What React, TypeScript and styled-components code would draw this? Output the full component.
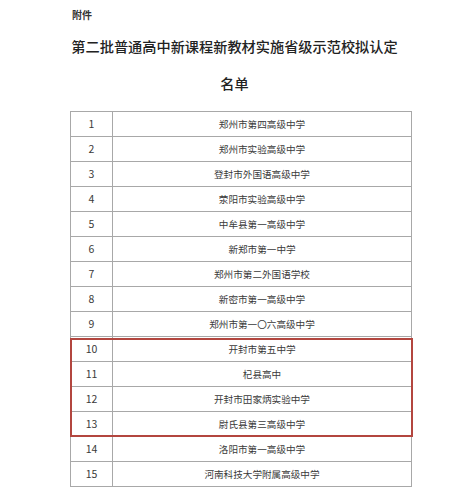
import React from "react";
import styled, { createGlobalStyle } from "styled-components";

const GlobalStyle = createGlobalStyle`
  html, body {
    margin: 0;
    padding: 0;
    background: #ffffff;
  }
  body {
    font-family: "Noto Sans CJK SC", "Noto Sans", sans-serif;
  }
`;

const Page = styled.div`
  width: 469px;
  height: 500px;
  padding-top: 8px;
  box-sizing: border-box;
  display: flex;
  flex-direction: column;
  background: #fff;
`;

const Label = styled.div`
  margin-left: 72px;
  font-size: 10px;
  line-height: 13px;
  font-weight: 700;
  color: #333;
`;

const Title = styled.div<{ $top: number }>`
  margin-top: ${(p) => p.$top}px;
  text-align: center;
  font-size: 14.2px;
  line-height: 20px;
  font-weight: 500;
  color: #222;
  white-space: nowrap;
`;

const Table = styled.div`
  margin: 18px 0 0 70px;
  width: 341px;
  border-top: 1px solid #a8a8a8;
  border-left: 1px solid #a8a8a8;
  display: flex;
  flex-direction: column;
`;

const Highlight = styled.div`
  position: relative;
  display: flex;
  flex-direction: column;
  &::after {
    content: "";
    position: absolute;
    top: 1px;
    left: -1px;
    right: -1px;
    bottom: 0;
    border: 2px solid #b3463f;
    pointer-events: none;
  }
`;

const Row = styled.div`
  display: grid;
  grid-template-columns: 42px 1fr;
  height: 25px;
`;

const Cell = styled.div<{ $num?: boolean }>`
  border-right: 1px solid #a8a8a8;
  border-bottom: 1px solid #a8a8a8;
  display: flex;
  align-items: center;
  justify-content: center;
  font-size: ${(p) => (p.$num ? "10.5px" : "9.6px")};
  color: #3a3a3a;
  line-height: 1;
  padding-top: 1px;
  box-sizing: border-box;
`;

const schools = [
  "郑州市第四高级中学",
  "郑州市实验高级中学",
  "登封市外国语高级中学",
  "荥阳市实验高级中学",
  "中牟县第一高级中学",
  "新郑市第一中学",
  "郑州市第二外国语学校",
  "新密市第一高级中学",
  "郑州市第一〇六高级中学",
  "开封市第五中学",
  "杞县高中",
  "开封市田家炳实验中学",
  "尉氏县第三高级中学",
  "洛阳市第一高级中学",
  "河南科技大学附属高级中学",
];

const renderRow = (name: string, i: number) => (
  <Row key={i}>
    <Cell $num>{i + 1}</Cell>
    <Cell>{name}</Cell>
  </Row>
);

export default function App() {
  return (
    <>
      <GlobalStyle />
      <Page>
        <Label>附件</Label>
        <Title $top={15}>第二批普通高中新课程新教材实施省级示范校拟认定</Title>
        <Title $top={17}>名单</Title>
        <Table>
          {schools.slice(0, 9).map((s, i) => renderRow(s, i))}
          <Highlight>{schools.slice(9, 13).map((s, i) => renderRow(s, i + 9))}</Highlight>
          {schools.slice(13).map((s, i) => renderRow(s, i + 13))}
        </Table>
      </Page>
    </>
  );
}
